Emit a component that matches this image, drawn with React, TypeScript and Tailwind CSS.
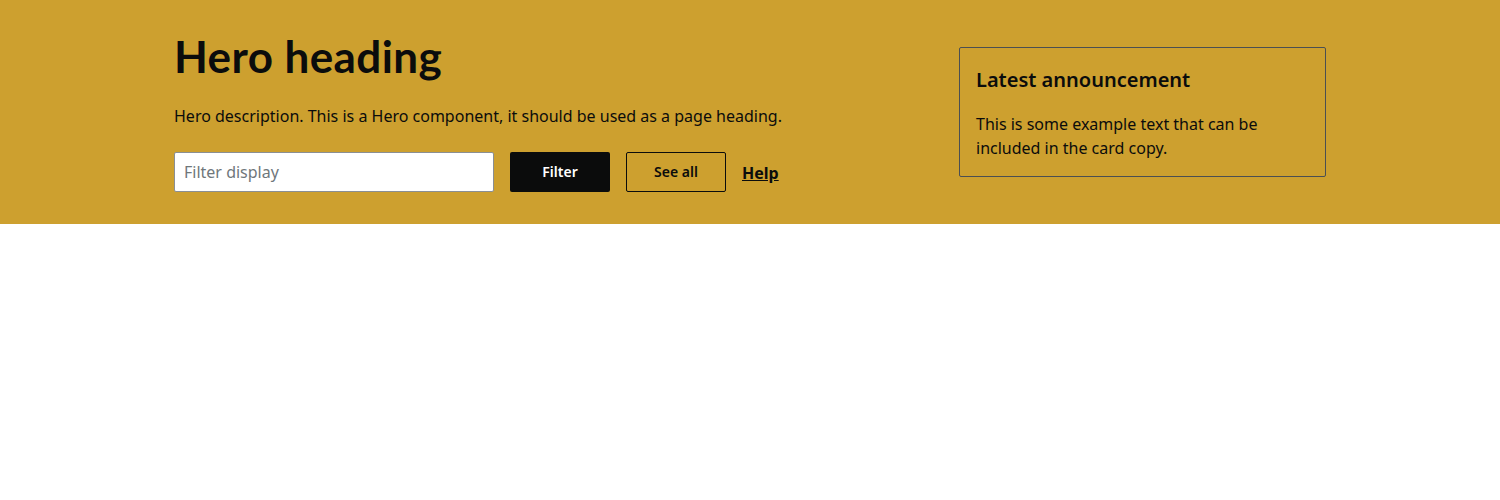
export default function App() {
  return (
    <div className="min-h-[500px] bg-white" style={{ fontFamily: '"Noto Sans", "Open Sans", sans-serif' }}>
      <section className="bg-[#cda02f] text-[#0b0c0c]">
        <div className="mx-auto flex w-[1152px] items-start justify-between pt-[28px] pb-[32px]">
          <div className="flex flex-col">
            <h1 className="font-['Lato',sans-serif] text-[44px] font-bold leading-[56px] tracking-[0.4px]">Hero heading</h1>
            <p className="mt-[20px] text-base leading-6">
              Hero description. This is a Hero component, it should be used as a page heading.
            </p>
            <div className="mt-[24px] flex items-center gap-4">
              <input
                placeholder="Filter display"
                className="h-10 w-[320px] rounded-[2px] border border-[#8a8f94] bg-white px-[9px] text-base text-[#0b0c0c] placeholder-[#6f777b] outline-none"
              />
              <button className="h-10 w-[100px] rounded-[2px] bg-[#0b0c0c] text-sm font-semibold text-white">
                Filter
              </button>
              <button className="h-10 w-[100px] rounded-[2px] border border-[#0b0c0c] text-sm font-semibold">
                See all
              </button>
              <a href="#" className="mt-[2px] text-base font-bold underline">
                Help
              </a>
            </div>
          </div>
          <div className="mt-[19px] w-[367px] rounded-[2px] border border-[#4b4f52] px-4 pt-[18px] pb-[16px]">
            <h2 className="text-[20px] font-semibold leading-7">Latest announcement</h2>
            <p className="mt-[18px] text-base leading-6">
              This is some example text that can be included in the card copy.
            </p>
          </div>
        </div>
      </section>
    </div>
  );
}
